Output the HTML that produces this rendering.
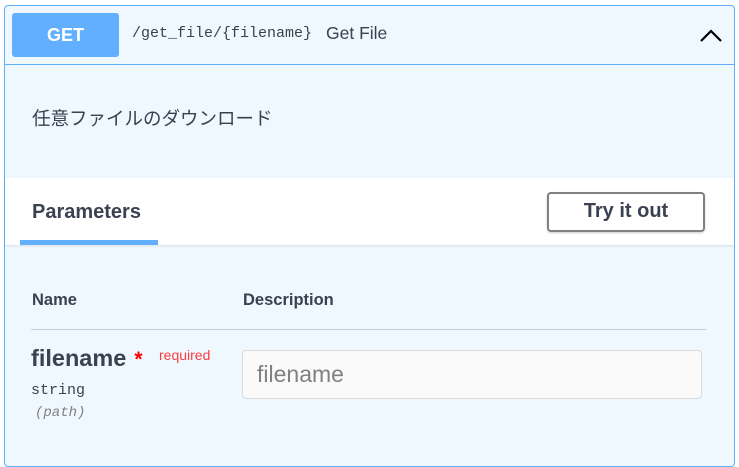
<!DOCTYPE html>
<html><head><meta charset="utf-8"><style>
body{margin:0;width:739px;height:438px;overflow:hidden;background:#fff;font-family:"Liberation Sans","Noto Sans CJK JP",sans-serif;}
.box{position:absolute;left:4px;top:5px;width:729px;height:460px;border:1px solid #61affe;border-radius:4px;background:#eff7ff;}
.hdr{position:absolute;left:0;top:0;width:729px;height:58px;border-bottom:1px solid #61affe;}
.get{position:absolute;left:7px;top:7px;width:107px;height:44px;background:#61affe;border-radius:3px;color:#fff;font-weight:bold;font-size:18px;line-height:44px;text-align:center;}
.path{position:absolute;left:127px;top:19px;font-family:"Liberation Mono",monospace;font-size:15px;color:#3b4151;}
.sum{position:absolute;left:321px;top:17px;font-size:17.5px;color:#3b4151;}
.desc{position:absolute;left:27px;top:99px;font-size:18.5px;color:#3b4151;}
.tabs{position:absolute;left:0;top:172px;width:729px;height:67px;background:#fff;box-shadow:0 1px 2px rgba(0,0,0,.1);}
.tab{position:absolute;left:27px;top:23px;font-weight:bold;font-size:20px;color:#3b4151;}
.ul{position:absolute;left:15px;top:62px;width:138px;height:5px;background:#61affe;}
.try{position:absolute;left:542px;top:14px;width:154px;height:36px;border:2px solid #808080;border-radius:4px;font-weight:bold;font-size:20px;color:#3b4151;text-align:center;line-height:34px;box-shadow:0 1px 2px rgba(0,0,0,.2);background:#fff;}
.th{position:absolute;top:285px;font-weight:bold;font-size:16.5px;color:#3b4151;}
.line{position:absolute;left:26px;top:323px;width:675px;height:1px;background:#c5cdd7;}
.pn{position:absolute;left:26px;top:339px;font-weight:bold;font-size:23.5px;color:#3b4151;}
.star{color:#f00;font-size:21px;margin-left:8px;}
.req{position:absolute;left:154px;top:341px;font-size:14px;color:#f93e3e;}
.type{position:absolute;left:26px;top:376px;font-family:"Liberation Mono",monospace;font-size:15px;color:#3b4151;}
.in{position:absolute;left:30px;top:399px;font-family:"Liberation Mono",monospace;font-style:italic;font-size:14px;color:#808080;}
.inp{position:absolute;left:237px;top:344px;border:1px solid #d9d9d9;border-radius:4px;background:#fafafa;font-size:23px;color:#808080;line-height:46px;padding-left:14px;box-sizing:border-box;width:460px;height:49px;}
</style></head><body>
<div class="box">
<div class="hdr">
<div class="get">GET</div>
<div class="path">/get_file/{filename}</div>
<div class="sum">Get File</div>
<svg style="position:absolute;left:694px;top:22px" width="24" height="16"><path d="M2 13 L12 3 L22 13" fill="none" stroke="#000" stroke-width="2.2"/></svg>
</div>
<div class="desc">任意ファイルのダウンロード</div>
<div class="tabs"><div class="tab">Parameters</div><div class="ul"></div><div class="try">Try it out</div></div>
<div class="th" style="left:27px">Name</div>
<div class="th" style="left:238px">Description</div>
<div class="line"></div>
<div class="pn">filename<span class="star">*</span></div>
<div class="req">required</div>
<div class="type">string</div>
<div class="in">(path)</div>
<div class="inp">filename</div>
</div>
</body></html>
